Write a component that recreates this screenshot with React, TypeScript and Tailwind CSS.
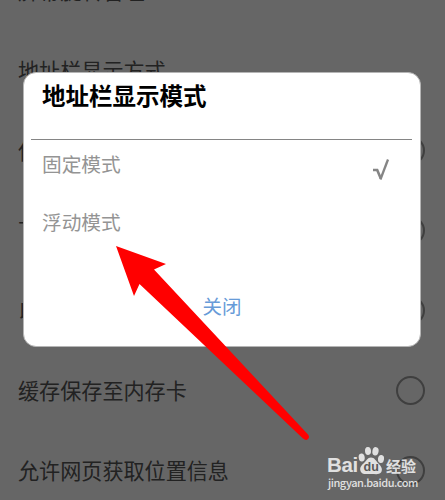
const ROWS = [
  { label: '屏幕旋转管理', toggle: false },
  { label: '地址栏显示方式', toggle: false },
  { label: '使用系统下载', toggle: true },
  { label: '下载完成提示', toggle: true },
  { label: '以无图模式浏览', toggle: true },
  { label: '缓存保存至内存卡', toggle: true },
  { label: '允许网页获取位置信息', toggle: true },
];

const MODES = [
  { label: '固定模式', selected: true },
  { label: '浮动模式', selected: false },
];

function SettingsList() {
  return (
    <div className="-mt-[50px] flex flex-col pr-5 pl-[18px]">
      {ROWS.map((row) => (
        <div key={row.label} className="flex h-20 shrink-0 items-center justify-between">
          <span className="pt-0.5 text-[21.1px] leading-none text-[#222]">{row.label}</span>
          {row.toggle && <span className="size-[29px] rounded-full border-2 border-[#3f3f3f]" />}
        </div>
      ))}
    </div>
  );
}

function ModeDialog() {
  return (
    <div className="absolute top-[72px] left-[23px] flex h-[275px] w-[398px] flex-col rounded-[13px] border border-[#b5b5b5] bg-white">
      <h2 className="mt-2.5 ml-[18px] h-14 text-[23.5px] leading-[24px] font-bold text-black">地址栏显示模式</h2>
      <div className="mr-2 ml-[7px] h-px bg-[#858585]" />
      <div className="flex flex-col">
        {MODES.map((mode) => (
          <div key={mode.label} className="flex h-[58px] items-start justify-between pt-3 pr-[30px] pl-[18px]">
            <span className="text-[19.7px] leading-6 text-[#949494]">{mode.label}</span>
            {mode.selected && (
              <svg className="mt-[6px] h-6 w-[18px]" viewBox="0 0 18 24" fill="none" stroke="#858585">
                <path d="M1 12H5.200L8.800 20.500" strokeWidth="2.6" />
                <path d="M8.400 21.500L16 1.500" strokeWidth="2.3" />
              </svg>
            )}
          </div>
        ))}
      </div>
      <button className="mt-[38px] self-center text-[19.5px] leading-6 text-[#679bd8]">关闭</button>
    </div>
  );
}

function Watermark() {
  return (
    <div className="absolute top-[445px] left-[327px] w-[92px] text-white opacity-80">
      <div className="flex h-[30px] items-end">
        <span className="w-[31px] font-['Liberation_Sans'] text-[20.5px] leading-[21px] font-bold tracking-[-0.4px]">Bai</span>
        <div className="relative h-[30px] w-[27px] shrink-0">
          <svg className="h-[30px] w-[27px]" viewBox="0 0 27 30">
            <g fill="currentColor">
              <ellipse cx="3.7" cy="12.5" rx="3" ry="4" transform="rotate(-8 3.7 12.5)" />
              <ellipse cx="10" cy="6" rx="3" ry="4" transform="rotate(-4 10 6)" />
              <ellipse cx="17.5" cy="6.3" rx="3.1" ry="4.2" transform="rotate(10 17.5 6.3)" />
              <ellipse cx="23" cy="14" rx="3" ry="4" transform="rotate(8 23 14)" />
              <path d="M13 12.500C9.500 12.500 8.500 16 5.500 18.500C2 21.500 1.500 24 3 27C4.500 29.800 8 29 13 29C18 29 21 29.800 23 27.500C25 24.500 23.500 21.500 20.500 18.500C17.500 15.500 16.500 12.500 13 12.500Z" />
            </g>
          </svg>
          <span className="absolute top-[16px] left-[5.500px] font-['Liberation_Sans'] text-[12.500px] leading-[12px] font-bold text-[#555]">du</span>
        </div>
        <span className="ml-px text-[15px] leading-[18px] font-bold whitespace-nowrap">经验</span>
      </div>
      <div className="pl-px text-[11px] leading-[14px] font-medium tracking-[-0.45px]">jingyan.baidu.com</div>
    </div>
  );
}

export default function App() {
  return (
    <div className="relative h-[500px] w-[445px] overflow-hidden bg-[#666] font-['Noto_Sans_CJK_SC',sans-serif]">
      <SettingsList />
      <ModeDialog />
      <Watermark />
      {/* Arrow pointing at the floating mode option */}
      <svg className="absolute top-0 left-0 h-[500px] w-[445px]" viewBox="0 0 445 500" fill="#f00">
        <path d="M116 246L166 264L154 269.500L308 434.500Q310 437 308 439Q306 441 303 438.500L139.500 284L134 296Z" />
      </svg>
    </div>
  );
}
